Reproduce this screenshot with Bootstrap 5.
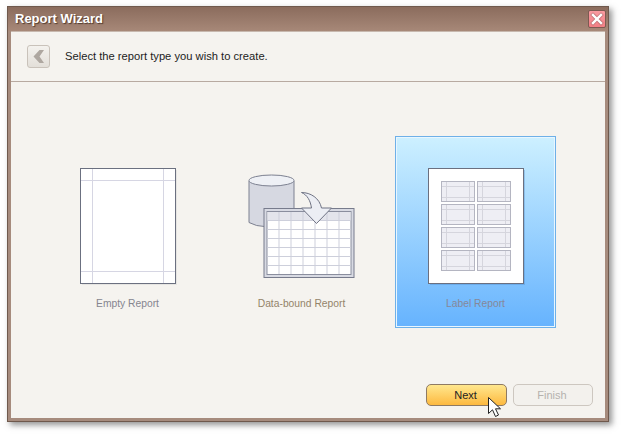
<!DOCTYPE html>
<html lang="en">
<head>
<meta charset="utf-8">
<title>Report Wizard</title>
<link href="https://cdn.jsdelivr.net/npm/bootstrap@5.3.0/dist/css/bootstrap.min.css" rel="stylesheet">
<style>
html,body{height:100%;background:#fff;overflow:hidden}
body{font-family:"Liberation Sans",Arial,sans-serif;font-size:11px;padding:6px 0 0 7px}
.wiz-window{width:602px;height:416px;border:1px solid #6f594d;background:#a68b7d;box-shadow:3px 3px 6px rgba(60,60,60,.55);padding:0 3px 3px 3px;position:relative}
.wiz-title{height:24px;margin:0 -3px;padding:0 2px 0 7px;background:linear-gradient(#8b6c5d,#a78878)}
.wiz-title-text{color:#fff;font-size:13px;font-weight:700;text-shadow:1px 1px 1px rgba(50,30,20,.7)}
.wiz-close{width:18px;height:18px;padding:0;border:1px solid #7d5a52;border-radius:2px;background:linear-gradient(#f99aa0,#f27f85);line-height:0}
.wiz-client{background:#f5f3ef;min-height:0;border-top:1px solid #c7b8ae}
.wiz-head{height:50px;border-bottom:1px solid #b8aaa1;padding-left:16px;gap:15px;color:#1c1c1c;font-size:11.2px}
.wiz-back{width:23px;height:23px;padding:0;border:1px solid #c9c2ba;border-radius:3px;background:linear-gradient(#f4f2ee,#e3dfd9);line-height:0}
.wiz-gallery{padding:54px 0 0 36px;gap:13px}
.wiz-item{width:161px;height:192px;padding-top:30px;border:1px solid transparent;outline:1px solid transparent;outline-offset:-2px}
.wiz-item svg{display:block}
.wiz-item.picked{background:linear-gradient(#cdf0ff,#66b3fe);border-color:#6eb0e8;outline-color:#e8f6ff}
.wiz-cap{margin-top:10px;font-size:10.3px;line-height:13px;color:#85858f}
.wiz-cap.tan{color:#94846a}
.wiz-cap.pickedcap{color:#868899}
.wiz-foot{padding:0 12px 12px 0;gap:6px}
.wiz-btn{width:81px;height:22px;padding:0 2px 0 0;font-size:11px;line-height:20px;border-radius:5px;color:#222;--bs-btn-active-color:#222}
.wiz-btn.go{border:1px solid #8f7a62;background:linear-gradient(#ffe78e,#fdb93f)}
.wiz-btn.off{width:80px;border:1px solid #cdc7c0;background:#f3f1ed;color:#b5b2ad;opacity:1}
.wiz-cursor{position:absolute;left:479px;top:389px;pointer-events:none}
</style>
</head>
<body>
<div class="wiz-window d-flex flex-column">
  <div class="wiz-title d-flex align-items-center justify-content-between flex-shrink-0">
    <span class="wiz-title-text">Report Wizard</span>
    <button type="button" class="wiz-close btn" aria-label="Close">
      <svg width="16" height="16" viewBox="0 0 16 16"><path d="M4 4 12 12M12 4 4 12" stroke="#8a5a5a" stroke-width="4" stroke-linecap="square" opacity=".45"/><path d="M4 4 12 12M12 4 4 12" stroke="#fff" stroke-width="2.4" stroke-linecap="square"/></svg>
    </button>
  </div>
  <div class="wiz-client d-flex flex-column flex-grow-1">
    <div class="wiz-head d-flex align-items-center flex-shrink-0">
      <button type="button" class="wiz-back btn" aria-label="Back">
        <svg width="21" height="21" viewBox="0 0 21 21"><path d="M11.500 4 5.500 10.500 11.500 17H16L11.500 10.500 16 4Z" fill="#aea7a0"/></svg>
      </button>
      <span>Select the report type you wish to create.</span>
    </div>
    <div class="wiz-gallery d-flex flex-grow-1">
      <div class="wiz-item d-flex flex-column align-items-center">
        <svg width="100" height="120" viewBox="78 167 100 120">
          <rect x="82" y="170" width="95" height="115" fill="#ccc" opacity=".35"/>
          <rect x="80.500" y="168.500" width="95" height="115" fill="#fff" stroke="#6b7080"/>
          <path d="M81 180.500H175M81 271.500H175M92.500 169V283M163.500 169V283" stroke="#d6d6e3" fill="none"/>
        </svg>
        <div class="wiz-cap">Empty Report</div>
      </div>
      <div class="wiz-item d-flex flex-column align-items-center">
        <svg width="109" height="120" viewBox="246.500 167 109 120">
          <path d="M248.500 181V222.500Q256 226.500 271 226.500H264V209H293.500V181Z" fill="#d6d8e1"/>
          <path d="M248.500 181V222.500Q256 226.500 264 226.500M293.500 181V208" fill="none" stroke="#7c8090"/>
          <ellipse cx="271" cy="180.500" rx="22.500" ry="5.500" fill="#eef0f5" stroke="#7c8090"/>
          <rect x="263.500" y="208.500" width="90" height="69" fill="#d8dae3" stroke="#777b8c"/>
          <rect x="266.500" y="211.500" width="84" height="63" fill="#fff" stroke="#8a8e9e"/>
          <rect x="267" y="212" width="83" height="8" fill="#e4e5ec"/>
          <path d="M267 220.500H350M267 229.500H350M267 238.500H350M267 247.500H350M267 256.500H350M267 265.500H350M278.500 212V274M290.500 212V274M302.500 212V274M314.500 212V274M326.500 212V274M338.500 212V274" stroke="#cdcfdb" fill="none"/>
          <path d="M301 192.500C310 192.500 319 198 321 208H331L316 223.500 301 208H311C310 201 307 195 301 192.500Z" fill="#eceef4" stroke="#6f7384" stroke-linejoin="round"/>
        </svg>
        <div class="wiz-cap tan">Data-bound Report</div>
      </div>
      <div class="wiz-item picked d-flex flex-column align-items-center">
        <svg width="100" height="120" viewBox="426 167 100 120">
          <rect x="430" y="170" width="95" height="115" fill="#3f7fbf" opacity=".3"/>
          <rect x="428.500" y="168.500" width="95" height="115" fill="#fff" stroke="#6b7080"/>
          <g fill="#eeeef4" stroke="#b4b5c1">
            <rect x="441.500" y="181.500" width="33" height="20"/><rect x="477.500" y="181.500" width="33" height="20"/>
            <rect x="441.500" y="204.500" width="33" height="20"/><rect x="477.500" y="204.500" width="33" height="20"/>
            <rect x="441.500" y="227.500" width="33" height="20"/><rect x="477.500" y="227.500" width="33" height="20"/>
            <rect x="441.500" y="250.500" width="33" height="20"/><rect x="477.500" y="250.500" width="33" height="20"/>
          </g>
          <path d="M442 186.500H474M442 197.500H474M446.500 182V201M469.500 182V201M478 186.500H510M478 197.500H510M482.500 182V201M505.500 182V201M442 209.500H474M442 220.500H474M446.500 205V224M469.500 205V224M478 209.500H510M478 220.500H510M482.500 205V224M505.500 205V224M442 232.500H474M442 243.500H474M446.500 228V247M469.500 228V247M478 232.500H510M478 243.500H510M482.500 228V247M505.500 228V247M442 255.500H474M442 266.500H474M446.500 251V270M469.500 251V270M478 255.500H510M478 266.500H510M482.500 251V270M505.500 251V270" stroke="#d5d5dd" fill="none"/>
        </svg>
        <div class="wiz-cap pickedcap">Label Report</div>
      </div>
    </div>
    <div class="wiz-foot d-flex justify-content-end flex-shrink-0">
      <button type="button" class="wiz-btn go btn">Next</button>
      <button type="button" class="wiz-btn off btn" disabled>Finish</button>
    </div>
  </div>
  <svg class="wiz-cursor" width="16" height="24" viewBox="0 0 16 24"><path d="M1.500 1.500V17.500L5.500 13.800 8.500 20.500 11.500 19 8.500 12.800H13.500Z" fill="#fff" stroke="#222" stroke-width="1" stroke-linejoin="miter"/></svg>
</div>
<script src="https://cdn.jsdelivr.net/npm/bootstrap@5.3.0/dist/js/bootstrap.bundle.min.js"></script>
</body>
</html>
